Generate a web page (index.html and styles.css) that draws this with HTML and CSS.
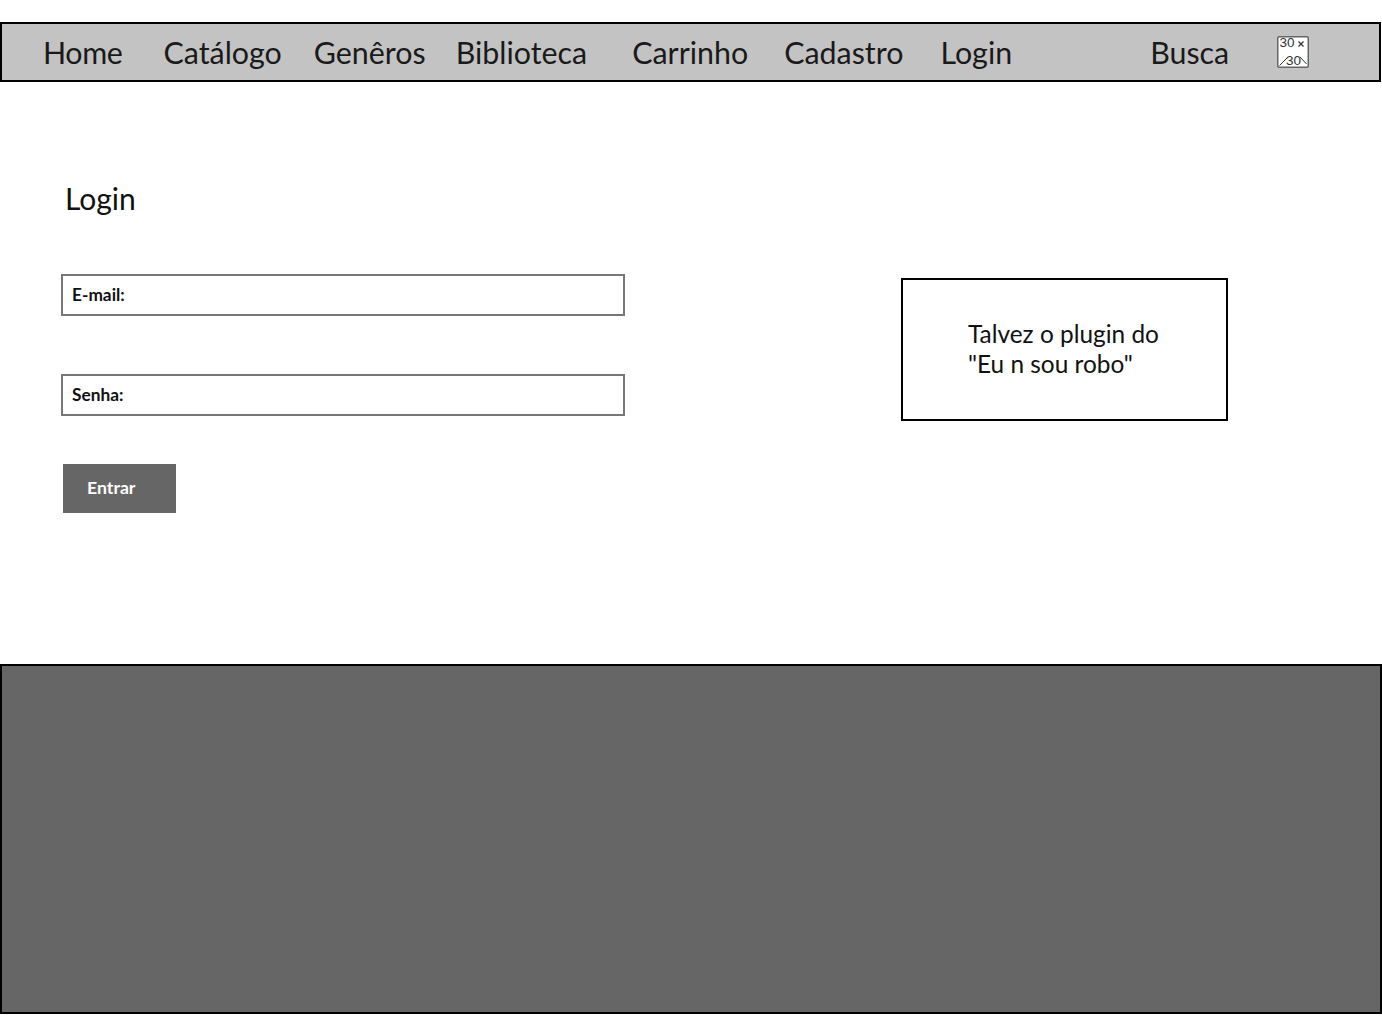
FILE: index.html
```html
<!DOCTYPE html>
<html lang="pt">
<head>
<meta charset="utf-8">
<title>Login</title>
<link rel="stylesheet" href="styles.css">
</head>
<body>
<nav class="nav">
  <a class="nav-link home">Home</a>
  <a class="nav-link catalogo">Catálogo</a>
  <a class="nav-link generos">Genêros</a>
  <a class="nav-link biblioteca">Biblioteca</a>
  <a class="nav-link carrinho">Carrinho</a>
  <a class="nav-link cadastro">Cadastro</a>
  <a class="nav-link login">Login</a>
  <a class="nav-link busca">Busca</a>
  <svg class="nav-icon" width="32" height="32" viewBox="0 0 32 32">
    <rect x="0.75" y="0.75" width="30.5" height="30.5" rx="1.500" fill="#fff" stroke="#666" stroke-width="1.500"/>
    <text x="2.500" y="11" class="ph">30</text>
    <path d="M21.500 5.500l5 5M26.500 5.500l-5 5" stroke="#333" stroke-width="1.200" fill="none"/>
    <path d="M2.500 29.500l8-8M23 21l6.500 7" stroke="#333" fill="none"/>
    <text x="9" y="28.500" class="ph">30</text>
  </svg>
</nav>
<main class="main">
  <section class="form-col">
    <h1 class="title">Login</h1>
    <div class="field email"><span class="field-label">E-mail:</span></div>
    <div class="field senha"><span class="field-label">Senha:</span></div>
    <button class="submit">Entrar</button>
  </section>
  <aside class="robot">Talvez o plugin do<br>"Eu n sou robo"</aside>
</main>
<footer class="footer"></footer>
</body>
</html>
```
FILE: styles.css
```css
* { box-sizing: border-box; }
html, body { margin: 0; padding: 0; background: #fff; }
body { font-family: Lato, "Liberation Sans", sans-serif; color: #111; padding-top: 22px; height: 1020px; overflow: hidden; }

.nav {
  display: flex;
  align-items: center;
  width: 1381px;
  height: 60px;
  padding-left: 41px;
  background: #c3c3c3;
  border: 2px solid #000;
}
.nav-link { font-size: 30.4px; line-height: 56px; color: #1a1a1a; }
.home { letter-spacing: -0.4px; }
.catalogo { margin-left: 41px; }
.generos { margin-left: 32px; }
.biblioteca { margin-left: 30px; }
.carrinho { margin-left: 45px; }
.cadastro { margin-left: 36px; }
.login { margin-left: 37px; }
.busca { margin-left: 138px; }
.nav-icon { margin-left: 48px; display: block; }
.ph { font-family: "Liberation Sans", sans-serif; font-size: 13.500px; fill: #333; }

.main { display: flex; height: 582px; }
.form-col { width: 901px; padding: 98px 0 0 61px; display: flex; flex-direction: column; align-items: flex-start; }
.title { margin: 0; font-size: 30px; font-weight: 400; line-height: 36px; padding-left: 4px; color: #111; }
.field {
  width: 564px;
  height: 42px;
  border: 2px solid #777;
  display: flex;
  align-items: center;
  padding-left: 9px;
  background: #fff;
}
.email { margin-top: 58px; }
.senha { margin-top: 58px; }
.field-label { font-size: 17.300px; font-weight: 700; line-height: 38px; color: #111; }
.submit {
  margin: 48px 0 0 2px;
  width: 113px;
  height: 49px;
  background: #666;
  border: 0;
  padding: 0 0 2px 24px;
  text-align: left;
  color: #fff;
  font: 700 17.700px Lato, "Liberation Sans", sans-serif;
}
.robot {
  margin-top: 196px;
  width: 327px;
  height: 143px;
  border: 2px solid #000;
  padding: 39px 0 0 65px;
  font-size: 24.400px;
  line-height: 30px;
  color: #111;
}
.footer {
  width: 1382px;
  height: 350px;
  background: #666;
  border: 2px solid #000;
}
```
